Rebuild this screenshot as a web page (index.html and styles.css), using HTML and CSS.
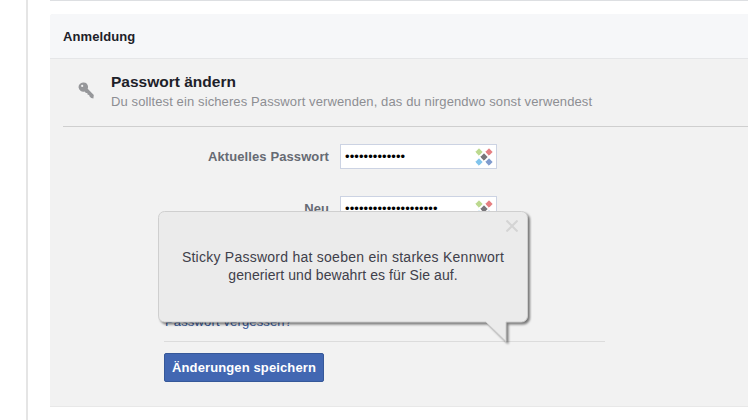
FILE: index.html
```html
<!DOCTYPE html>
<html lang="de">
<head>
  <meta charset="utf-8">
  <title>Anmeldung</title>
  <link rel="stylesheet" href="styles.css">
</head>
<body>
  <!-- Symbol im Passwortfeld -->
  <svg class="defs" width="0" height="0">
    <symbol id="sticky" viewBox="0 0 18 18">
      <path fill="#bcd98f" stroke="#bcd98f" stroke-linejoin="round" d="M4 .8l3.200 3.200L4 7.200.8 4z"/>
      <path fill="#e57f82" stroke="#e57f82" stroke-linejoin="round" d="M14 .8l3.200 3.200-3.200 3.200-3.200-3.200z"/>
      <path fill="#80c4ec" stroke="#80c4ec" stroke-linejoin="round" d="M4 10.800l3.200 3.200-3.200 3.200L.8 14z"/>
      <path fill="#7f9bcd" stroke="#7f9bcd" stroke-linejoin="round" d="M14 10.800l3.200 3.200-3.200 3.200-3.200-3.200z"/>
      <path fill="#777579" stroke="#777579" stroke-linejoin="round" d="M9 5.800l3.200 3.200L9 12.200 5.800 9z"/>
    </symbol>
  </svg>

  <div class="page">
    <div class="content">
      <div class="previous"></div>

      <div class="card">
        <h2 class="card-header">Anmeldung</h2>
        <div class="card-body">
          <div class="section-head">
            <svg class="key" width="17" height="17" viewBox="0 0 17 17">
              <path fill="#96979a" fill-rule="evenodd" d="M5 .5a4.600 4.600 0 1 0 1.500 9l1.500 1.400 1.200.2.500 1.700 1.400.3.500 1.500 1.500 1.500 2.300.3.400-3.400L9.700 6.800A4.600 4.600 0 0 0 5 .5zM4.200 2.800a1.100 1.100 0 1 1 0 2.200 1.100 1.100 0 0 1 0-2.200z"/>
            </svg>
            <div>
              <h3 class="title">Passwort ändern</h3>
              <p class="subtitle">Du solltest ein sicheres Passwort verwenden, das du nirgendwo sonst verwendest</p>
            </div>
          </div>

          <form class="form" onsubmit="return false;">
            <div class="row">
              <label for="old">Aktuelles Passwort</label>
              <div class="field">
                <input id="old" type="password" value="geheimespassw">
                <svg class="sticky"><use href="#sticky"/></svg>
              </div>
            </div>
            <div class="row">
              <label for="new">Neu</label>
              <div class="field">
                <input id="new" type="password" value="geheimespasswort1234">
                <svg class="sticky"><use href="#sticky"/></svg>
              </div>
            </div>
            <a class="forgot">Passwort vergessen?</a>
            <div class="actions">
              <button class="save">Änderungen speichern</button>
            </div>
          </form>
        </div>
      </div>
    </div>
  </div>

  <!-- Sprechblase -->
  <div class="bubble">
    <svg class="bubble-shape" width="380" height="145" viewBox="0 0 380 145">
      <path fill="#ebebeb" stroke="#cfcfcf" d="M6.500.500h357a6 6 0 0 1 6 6v98.500a6 6 0 0 1-6 6h-15.500v19.500l-20-19.500H6.500a6 6 0 0 1-6-6V6.500a6 6 0 0 1 6-6z"/>
    </svg>
    <svg class="close" width="12" height="12" viewBox="0 0 12 12">
      <path fill="none" stroke="#d4d4d4" stroke-width="2" d="M.5.5l11 11M11.500.5l-11 11"/>
    </svg>
    <p class="bubble-text">Sticky Password hat soeben ein starkes Kennwort<br><span class="tight">generiert und bewahrt es für Sie auf.</span></p>
  </div>
</body>
</html>
```
FILE: styles.css
```css
* {
  box-sizing: border-box;
}

body {
  margin: 0;
  background: #fff;
  color: #1d2129;
  font-family: "Liberation Sans", Arial, sans-serif;
  font-size: 13px;
  overflow: hidden;
}

h2, h3, p {
  margin: 0;
}

.defs {
  position: absolute;
}

.page {
  height: 420px;
  margin-left: 26px;
  border-left: 2px solid #e5e5e5;
  overflow: hidden;
}

.content {
  margin-left: 22px;
}

.previous {
  height: 1px;
  margin-bottom: 13px;
  background: #dddfe2;
}

.card {
  height: 393px;
  background: #f2f2f2;
  border-bottom: 1px solid #e8e8e8;
  border-radius: 3px 0 0 0;
  overflow: hidden;
}

.card-header {
  height: 45px;
  padding-left: 13px;
  background: #f6f7f9;
  border-bottom: 1px solid #e5e6e8;
  font-size: 13px;
  letter-spacing: 0.1px;
  line-height: 45px;
}

.card-body {
  padding-left: 13px;
}

.section-head {
  display: flex;
  height: 68px;
  padding: 13px 0 0 15px;
  border-bottom: 1px solid #cfcfcf;
}

.key {
  margin: 10px 16px 0 0;
}

.title {
  font-size: 15.5px;
  line-height: 20px;
}

.subtitle {
  color: #8d8e92;
  font-size: 13px;
  letter-spacing: 0.11px;
  line-height: 19px;
  white-space: nowrap;
}

.form {
  padding: 17px 0 0 101px;
}

.row {
  display: flex;
  align-items: center;
  height: 25px;
  margin-bottom: 27px;
}

.row label {
  width: 165px;
  margin-right: 11px;
  color: #666a73;
  font-weight: bold;
  letter-spacing: 0.1px;
  text-align: right;
}

.field {
  position: relative;
  width: 157px;
  height: 25px;
}

.field input {
  width: 100%;
  height: 100%;
  padding: 0 24px 0 4px;
  background: #fff;
  border: 1px solid #ccd3e3;
  outline: none;
  color: #000;
  font: 13px "Liberation Sans", Arial, sans-serif;
  letter-spacing: 0.08px;
}

.sticky {
  position: absolute;
  top: 4px;
  right: 4px;
  width: 18px;
  height: 18px;
}

.forgot {
  display: block;
  height: 15px;
  margin-top: 92px;
  padding-left: 1px;
  color: #365899;
  line-height: 17px;
  letter-spacing: 0.15px;
}

.actions {
  width: 441px;
  margin-top: 13px;
  padding-top: 11px;
  border-top: 1px solid #dcdcdc;
}

.save {
  width: 160px;
  height: 29px;
  padding: 0;
  background: #4267b2;
  border: 1px solid #365899;
  border-radius: 2px;
  color: #fff;
  font: bold 13px "Liberation Sans", Arial, sans-serif;
  letter-spacing: 0.12px;
}

.bubble {
  position: absolute;
  top: 211px;
  left: 158px;
  width: 370px;
  height: 112px;
}

.bubble-shape {
  position: absolute;
  top: 0;
  left: 0;
  overflow: visible;
  filter: drop-shadow(2px 2px 1px rgba(0, 0, 0, 0.5));
}

.close {
  position: absolute;
  top: 9px;
  right: 10px;
}

.bubble-text {
  position: relative;
  padding-top: 37px;
  color: #40404a;
  font-size: 14px;
  letter-spacing: 0.25px;
  line-height: 18px;
  text-align: center;
}

.tight {
  letter-spacing: 0.08px;
}
```
